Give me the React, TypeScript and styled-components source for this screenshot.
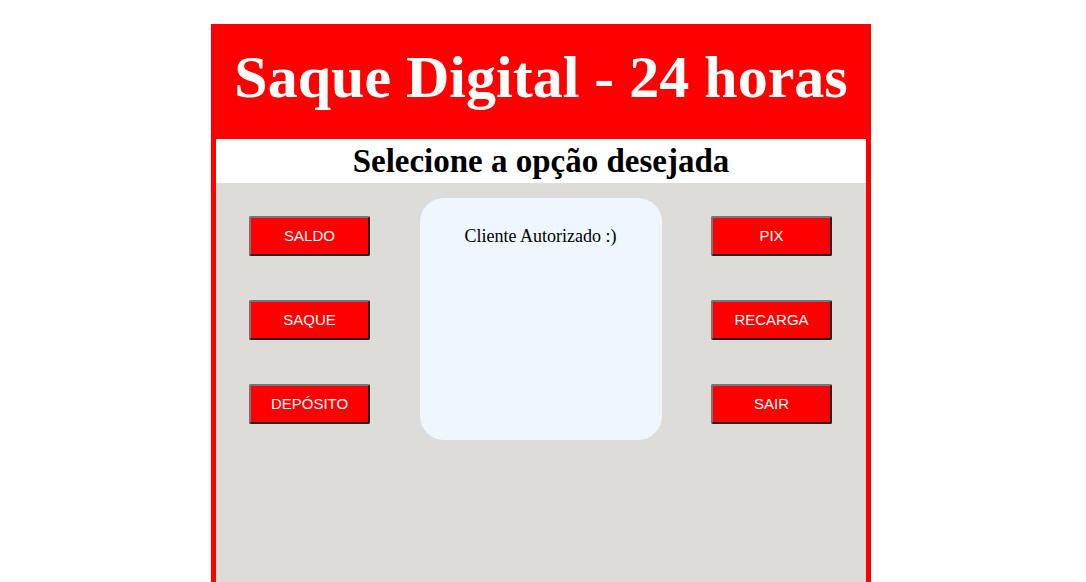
import React from "react";
import styled, { createGlobalStyle } from "styled-components";

const GlobalStyle = createGlobalStyle`
	html, body {
		margin: 0;
		padding: 0;
		background: #ffffff;
		overflow: hidden;
	}
	body {
		font-family: "Liberation Serif", "Times New Roman", serif;
	}
`;

const leftOptions = ["SALDO", "SAQUE", "DEPÓSITO"];
const rightOptions = ["PIX", "RECARGA", "SAIR"];

const App = () => {
	return (
		<>
			<GlobalStyle />
			<Page>
				<Machine>
					<Header>
						<Title>Saque Digital - 24 horas</Title>
					</Header>
					<Subtitle>Selecione a opção desejada</Subtitle>
					<Body>
						<Column>
							{leftOptions.map((o) => (
								<OptionButton key={o}>{o}</OptionButton>
							))}
						</Column>
						<Screen>
							<ScreenText>Cliente Autorizado :)</ScreenText>
						</Screen>
						<Column>
							{rightOptions.map((o) => (
								<OptionButton key={o}>{o}</OptionButton>
							))}
						</Column>
					</Body>
				</Machine>
			</Page>
		</>
	);
};

export default App;

const Page = styled.div`
	display: flex;
	justify-content: center;
	padding-top: 24px;
	padding-right: 4px;
`;

const Machine = styled.div`
	width: 650px;
	border: 5px solid #ff0000;
	border-top: none;
	background: #ff0000;
	display: flex;
	flex-direction: column;
`;

const Header = styled.div`
	height: 115px;
	display: flex;
	align-items: center;
	justify-content: center;
	background: #ff0000;
`;

const Title = styled.h1`
	margin: 0;
	color: #ffffff;
	font-size: 60px;
	font-weight: bold;
	line-height: 1;
	padding-bottom: 10px;
`;

const Subtitle = styled.h2`
	margin: 0;
	height: 44px;
	background: #ffffff;
	color: #000000;
	font-size: 33px;
	font-weight: bold;
	line-height: 44px;
	text-align: center;
`;

const Body = styled.div`
	height: 420px;
	background: #dedcd8;
	display: grid;
	grid-template-columns: 121px 242px 121px;
	justify-content: space-between;
	align-items: start;
	padding: 15px 34px 0 33px;
`;

const Column = styled.div`
	display: flex;
	flex-direction: column;
	gap: 44px;
	padding-top: 18px;
`;

const OptionButton = styled.button`
	width: 121px;
	height: 40px;
	background: #ff0000;
	color: #ffffff;
	font-family: "Liberation Sans", Arial, sans-serif;
	font-size: 15px;
	border: 2px solid;
	border-color: #767676 #222222 #222222 #767676;
	border-radius: 2px;
	padding: 0 0 2px;
	cursor: pointer;
`;

const Screen = styled.div`
	width: 242px;
	height: 242px;
	background: #eff7fe;
	border-radius: 24px;
	display: flex;
	justify-content: center;
`;

const ScreenText = styled.p`
	margin: 28px 0 0;
	font-size: 18px;
	color: #000000;
`;
